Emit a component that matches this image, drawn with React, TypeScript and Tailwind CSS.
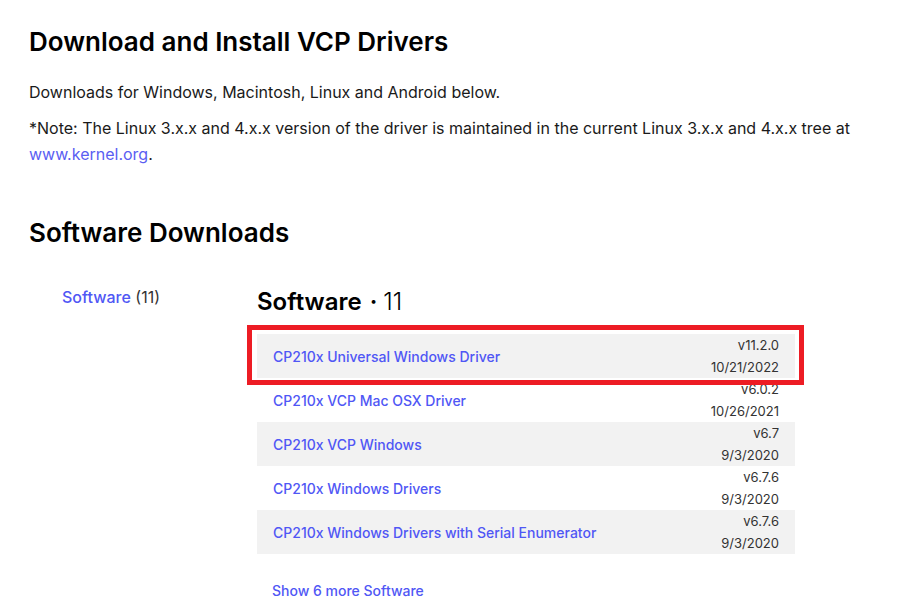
import React from "react";

const rows = [
  { name: "CP210x Universal Windows Driver", version: "v11.2.0", date: "10/21/2022" },
  { name: "CP210x VCP Mac OSX Driver", version: "v6.0.2", date: "10/26/2021" },
  { name: "CP210x VCP Windows", version: "v6.7", date: "9/3/2020" },
  { name: "CP210x Windows Drivers", version: "v6.7.6", date: "9/3/2020" },
  { name: "CP210x Windows Drivers with Serial Enumerator", version: "v6.7.6", date: "9/3/2020" },
];

export default function App() {
  return (
    <div
      className="w-[910px] h-[610px] overflow-hidden bg-white text-[#1a1a1a] pl-[29px] pt-[26px]"
      style={{ fontFamily: "Inter, 'Noto Sans', sans-serif" }}
    >
      <h1 className="text-[26px] leading-[32px] font-semibold text-black">
        Download and Install VCP Drivers
      </h1>
      <p className="mt-[21px] text-[16px] leading-[26px] text-[#1a1a1a]">
        Downloads for Windows, Macintosh, Linux and Android below.
      </p>
      <p className="mt-[10px] w-[850px] text-[16px] leading-[26px] text-[#1a1a1a]">
        *Note: The Linux 3.x.x and 4.x.x version of the driver is maintained in the current Linux 3.x.x and 4.x.x tree at{" "}
        <a className="text-[#5a5ef2]">www.kernel.org</a>.
      </p>

      <h2 className="mt-[50px] text-[26px] leading-[32px] font-semibold text-black">
        Software Downloads
      </h2>

      <div className="mt-[38px] flex">
        {/* category list */}
        <div className="w-[228px] pl-[33px]">
          <div className="text-[16px] leading-[20px]">
            <a className="font-medium text-[#5057f5]">Software</a>{" "}
            <span className="text-[#333]">(11)</span>
          </div>
        </div>

        <div className="w-[538px]">
          <div className="flex items-baseline leading-[30px] text-black">
            <span className="text-[24px] font-semibold">Software</span>
            <span className="ml-[8px] text-[24px] font-semibold">·</span>
            <span className="ml-[6px] text-[24px] font-light">11</span>
          </div>

          <div className="mt-[17px]">
            {rows.map((r, i) => (
              <div
                key={r.name}
                className={`relative flex h-[44px] items-center justify-between pl-[16px] pr-[16px] ${
                  i % 2 === 0 ? "bg-[#f2f2f2]" : "bg-white"
                } ${i === 0 ? "z-10" : ""}`}
              >
                <a className="text-[14px] font-medium text-[#5057f5]">{r.name}</a>
                <div className="text-right text-[13px] leading-[22px] text-[#333]">
                  <div>{r.version}</div>
                  <div>{r.date}</div>
                </div>
                {i === 0 && (
                  <div className="pointer-events-none absolute -left-[10px] -top-[9px] -right-[9px] -bottom-[7px] border-[5px] border-[#ed1c24]" />
                )}
              </div>
            ))}
          </div>

          <div className="mt-[27px] pl-[15px] text-[14px] leading-[20px]">
            <a className="font-medium text-[#5057f5]">Show 6 more Software</a>
          </div>
        </div>
      </div>
    </div>
  );
}
